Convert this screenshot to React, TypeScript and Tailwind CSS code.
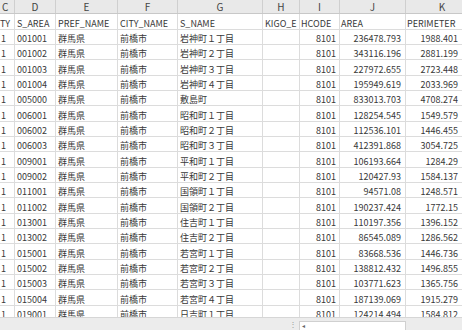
import React from "react";

const rows: [string, string, string, string][] = [
  ["001001", "岩神町１丁目", "236478.793", "1988.401"],
  ["001002", "岩神町２丁目", "343116.196", "2881.199"],
  ["001003", "岩神町３丁目", "227972.655", "2723.448"],
  ["001004", "岩神町４丁目", "195949.619", "2033.969"],
  ["005000", "敷島町", "833013.703", "4708.274"],
  ["006001", "昭和町１丁目", "128254.545", "1549.579"],
  ["006002", "昭和町２丁目", "112536.101", "1446.455"],
  ["006003", "昭和町３丁目", "412391.868", "3054.725"],
  ["009001", "平和町１丁目", "106193.664", "1284.29"],
  ["009002", "平和町２丁目", "120427.93", "1584.137"],
  ["011001", "国領町１丁目", "94571.08", "1248.571"],
  ["011002", "国領町２丁目", "190237.424", "1772.15"],
  ["013001", "住吉町１丁目", "110197.356", "1396.152"],
  ["013002", "住吉町２丁目", "86545.089", "1286.562"],
  ["015001", "若宮町１丁目", "83668.536", "1446.736"],
  ["015002", "若宮町２丁目", "138812.432", "1496.855"],
  ["015003", "若宮町３丁目", "103771.623", "1365.756"],
  ["015004", "若宮町４丁目", "187139.069", "1915.279"],
  ["019001", "日吉町１丁目", "124214.494", "1584.812"],
];

const heights = ["h-[15px]", "h-[15px]", "h-[16px]"];
const widths = ["w-[15px]", "w-[41px]", "w-[62px]", "w-[60px]", "w-[85px]", "w-[37px]", "w-[40px]", "w-[66px]", "w-[73px]"];

const cell = "shrink-0 border-r border-[#dcdcdc] overflow-hidden whitespace-nowrap flex items-end pb-[1px]";

const dataAligns = [
  "justify-start pl-[1px]",
  "justify-start pl-[2px]",
  "justify-start pl-[2px]",
  "justify-start pl-[2px]",
  "justify-start pl-[2px]",
  "justify-start pl-[2px]",
  "justify-end pr-[3px]",
  "justify-end pr-[4px]",
  "justify-end pr-[20px]",
];
const headAligns = [
  "justify-start pl-0",
  "justify-start pl-[2px]",
  "justify-start pl-[2px]",
  "justify-start pl-[2px]",
  "justify-start pl-[2px]",
  "justify-start pl-[2px]",
  "justify-start pl-[1px]",
  "justify-start pl-[1px]",
  "justify-start pl-[1px]",
];

function Row({ h, cols, aligns }: { h: string; cols: React.ReactNode[]; aligns: string[] }) {
  return (
    <div className={`flex ${h} border-b border-[#dcdcdc] shrink-0`}>
      {cols.map((c, i) => (
        <div key={i} className={`${cell} ${widths[i]} ${aligns[i]}`}>
          {c}
        </div>
      ))}
    </div>
  );
}

function HeaderRow() {
  const letters = ["C", "D", "E", "F", "G", "H", "I", "J", "K"];
  return (
    <div className="flex h-[14px] shrink-0 bg-[#e9e9e9] border-b border-[#c8c8c8] text-[#444]">
      {letters.map((l, i) => (
        <div
          key={l}
          className={`shrink-0 ${widths[i]} border-r border-[#cfcfcf] flex items-center ${i === 0 ? "justify-start pl-[2px]" : "justify-center"} text-[10px]`}
        >
          {l}
        </div>
      ))}
    </div>
  );
}

export default function App() {
  return (
    <div
      className="w-[462px] h-[330px] overflow-hidden bg-white flex flex-col text-[9px] text-[#383838] leading-none"
      style={{ fontFamily: '"Noto Sans CJK JP", "Noto Sans", sans-serif' }}
    >
      <div className="flex-1 overflow-hidden flex flex-col">
        <HeaderRow />
        <Row
          h="h-[16px]"
          aligns={headAligns}
          cols={["TY", "S_AREA", "PREF_NAME", "CITY_NAME", "S_NAME", "KIGO_E", "HCODE", "AREA", "PERIMETER"]}
        />
        {rows.map((r, i) => (
          <Row
            key={r[0]}
            h={heights[i % 3]}
            aligns={dataAligns}
            cols={["1", r[0], "群馬県", "前橋市", r[1], "", "8101", r[2], r[3]]}
          />
        ))}
      </div>
      <div className="h-[13px] shrink-0 bg-[#ececec] border-t border-[#d6d6d6] flex items-end">
        <div className="w-[299px] shrink-0 flex justify-end pr-[2px] pb-[2px] text-[#9a9a9a] text-[8px]">⋮</div>
        <div className="w-[107px] h-[9px] bg-white border border-[#d0d0d0] border-b-0 flex items-center pl-[2px] text-[#666] text-[6px]">◂</div>
      </div>
    </div>
  );
}
